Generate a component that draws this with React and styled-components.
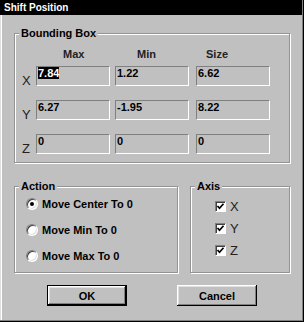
import React from "react";
import styled, { createGlobalStyle } from "styled-components";

const GlobalStyle = createGlobalStyle`
  html, body {
    margin: 0;
    padding: 0;
    background: #c0c0c0;
  }
  body {
    font-family: "Liberation Sans", Arial, sans-serif;
  }
`;

const Window = styled.div`
  width: 304px;
  height: 322px;
  box-sizing: border-box;
  padding: 0 2px 2px 0;
  background: #c0c0c0;
  box-shadow: inset -1px -1px #000, inset -2px -2px #808080,
    inset 1px 1px #dfdfdf, inset 2px 2px #fff;
  display: flex;
  flex-direction: column;
  font-family: "Liberation Sans", Arial, sans-serif;
  color: #000;
`;

const TitleBar = styled.div`
  height: 15px;
  background: #000;
  color: #fff;
  font-weight: bold;
  font-size: 10px;
  line-height: 16px;
  padding-left: 4px;
  overflow: hidden;
`;

const Body = styled.div`
  padding: 12px 0 0 14px;
  display: flex;
  flex-direction: column;
`;

const Group = styled.fieldset`
  margin: 0;
  padding: ${(p) => p.$pad};
  width: ${(p) => p.$w}px;
  min-inline-size: 0;
  box-sizing: border-box;
  border: 1px solid #939393;
  box-shadow: inset 1px 1px #fff, 1px 1px #fff;
`;

const Legend = styled.legend`
  margin-left: 4px;
  padding: 0 2px;
  font-size: 11px;
  font-weight: bold;
  line-height: 13px;
  background: #c0c0c0;
`;

const Grid = styled.div`
  display: grid;
  grid-template-columns: 21px 79px 81px 74px;
  margin-bottom: ${(p) => p.$mb || 0}px;
`;

const Header = styled.div`
  grid-column: ${(p) => p.$col};
  padding-left: ${(p) => p.$indent}px;
  font-size: 11px;
  font-weight: bold;
  line-height: 13px;
  color: #222;
`;

const AxisLabel = styled.div`
  display: flex;
  align-items: flex-end;
  padding-left: 7px;
  font-size: 13px;
  line-height: 10px;
  color: #222;
`;

const Field = styled.div`
  width: 74px;
  height: 20px;
  box-sizing: border-box;
  border: 1px solid;
  border-color: #808080 #fff #fff #808080;
  padding: 0 1px;
  font-size: 11px;
  font-weight: bold;
  line-height: 12px;
  white-space: nowrap;
`;

const Selected = styled.span`
  background: #000;
  color: #fff;
`;

const BottomRow = styled.div`
  display: flex;
  gap: 12px;
  margin-top: 17px;
`;

const List = styled.div`
  display: flex;
  flex-direction: column;
  gap: ${(p) => p.$gap}px;
  padding-left: ${(p) => p.$indent || 0}px;
`;

const Option = styled.div`
  display: flex;
  align-items: center;
  gap: ${(p) => p.$gap}px;
  height: 16px;
  font-size: ${(p) => (p.$bold ? 11 : 13)}px;
  font-weight: ${(p) => (p.$bold ? "bold" : "normal")};
  color: ${(p) => (p.$bold ? "#000" : "#222")};
`;

const Radio = styled.span`
  position: relative;
  width: 12px;
  height: 12px;
  box-sizing: border-box;
  border-radius: 50%;
  border: 1px solid;
  border-color: #808080 #fff #fff #808080;
  box-shadow: inset 1px 1px #404040, inset -1px -1px #dfdfdf;
  background: #fff;
  flex: none;

  &::after {
    content: "";
    display: ${(p) => (p.$on ? "block" : "none")};
    position: absolute;
    left: 3px;
    top: 3px;
    width: 4px;
    height: 4px;
    border-radius: 50%;
    background: #000;
  }
`;

const CheckBox = styled.span`
  display: flex;
  align-items: center;
  justify-content: center;
  width: 11px;
  height: 11px;
  box-sizing: border-box;
  border: 1px solid;
  border-color: #808080 #fff #fff #808080;
  box-shadow: inset 1px 1px #404040;
  background: #fff;
  flex: none;
`;

const Buttons = styled.div`
  display: flex;
  gap: 50px;
  margin-top: 12px;
  padding-left: 33px;
`;

const Button = styled.button`
  width: 80px;
  height: 21px;
  box-sizing: border-box;
  padding: 0;
  background: #c0c0c0;
  border: ${(p) => (p.$default ? "1px solid #000" : "none")};
  box-shadow: inset -1px -1px #000, inset 1px 1px #fff,
    inset -2px -2px #808080, inset 2px 2px #dfdfdf;
  font-family: "Liberation Sans", Arial, sans-serif;
  font-size: 11px;
  font-weight: bold;
  color: #000;
`;

const rows = [
  { axis: "X", values: ["7.84", "1.22", "6.62"] },
  { axis: "Y", values: ["6.27", "-1.95", "8.22"] },
  { axis: "Z", values: ["0", "0", "0"] },
];

const actions = ["Move Center To 0", "Move Min To 0", "Move Max To 0"];

const Check = () => (
  <svg width="9" height="9" viewBox="0 0 9 9">
    <path d="M1.5 4 L3.5 6.2 L7.5 1.8" fill="none" stroke="#000" strokeWidth="1.7" />
  </svg>
);

const App = () => {
  return (
    <>
      <GlobalStyle />
      <Window>
        <TitleBar>Shift Position</TitleBar>
        <Body>
          <Group $w={276} $pad="8px 0 8px 0">
            <Legend>Bounding Box</Legend>
            <Grid $mb={5}>
              <Header $col={2} $indent={27}>Max</Header>
              <Header $col={3} $indent={22}>Min</Header>
              <Header $col={4} $indent={10}>Size</Header>
            </Grid>
            <List $gap={14}>
              {rows.map((row) => (
                <Grid key={row.axis}>
                  <AxisLabel>{row.axis}</AxisLabel>
                  {row.values.map((v, i) => (
                    <Field key={i}>
                      {row.axis === "X" && i === 0 ? <Selected>{v}</Selected> : v}
                    </Field>
                  ))}
                </Grid>
              ))}
            </List>
          </Group>

          <BottomRow>
            <Group $w={164} $pad="3px 0 8px 0">
              <Legend>Action</Legend>
              <List $gap={10} $indent={11}>
                {actions.map((a, i) => (
                  <Option key={a} $bold $gap={4}>
                    <Radio $on={i === 0} />
                    {a}
                  </Option>
                ))}
              </List>
            </Group>
            <Group $w={100} $pad="5px 0 8px 0">
              <Legend>Axis</Legend>
              <List $gap={6} $indent={24}>
                {["X", "Y", "Z"].map((a) => (
                  <Option key={a} $gap={4}>
                    <CheckBox>
                      <Check />
                    </CheckBox>
                    {a}
                  </Option>
                ))}
              </List>
            </Group>
          </BottomRow>

          <Buttons>
            <Button $default>OK</Button>
            <Button>Cancel</Button>
          </Buttons>
        </Body>
      </Window>
    </>
  );
};

export default App;
